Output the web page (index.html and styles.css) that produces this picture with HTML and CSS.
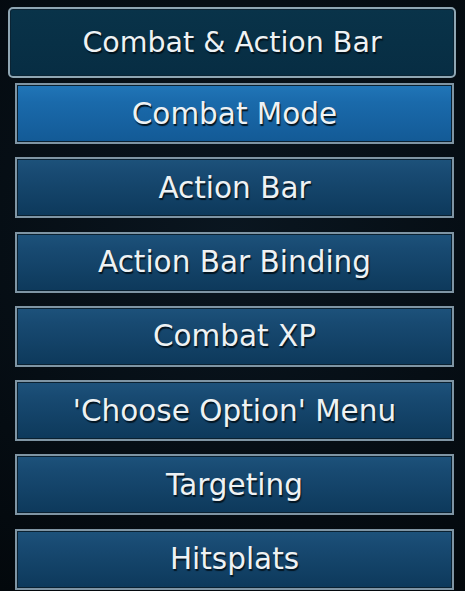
FILE: index.html
```html
<!DOCTYPE html>
<html lang="en">
<head>
    <meta charset="UTF-8">
    <meta name="viewport" content="width=device-width, initial-scale=1.0">
    <title>Combat &amp; Action Bar</title>
    <link rel="stylesheet" href="styles.css">
</head>
<body>
    <div class="panel">
        <div class="panel-title">Combat &amp; Action Bar</div>

        <ul class="menu">
            <li class="menu-item active">Combat Mode</li>
            <li class="menu-item">Action Bar</li>
            <li class="menu-item">Action Bar Binding</li>
            <li class="menu-item">Combat XP</li>
            <li class="menu-item">'Choose Option' Menu</li>
            <li class="menu-item">Targeting</li>
            <li class="menu-item">Hitsplats</li>
        </ul>
    </div>
</body>
</html>
```

FILE: styles.css
```css
* {
    margin: 0;
    padding: 0;
    box-sizing: border-box;
}

body {
    font-family: 'DejaVu Sans', Verdana, sans-serif;
    background: radial-gradient(circle at 50% 40%, #0a1620 0%, #050c12 70%, #03080c 100%);
    min-height: 100vh;
    color: #eef2f4;
}

.panel {
    padding: 7px 9px 0 8px;
}

.panel-title {
    height: 71px;
    display: flex;
    align-items: center;
    justify-content: center;
    background: linear-gradient(180deg, #093349 0%, #072d43 100%);
    border: 2px solid #8fa6b3;
    border-radius: 5px;
    box-shadow: inset 0 0 0 1px #0b2434;
    font-size: 28.5px;
    text-shadow: 1px 2px 1px #02121c;
    margin-bottom: 5px;
}

.menu {
    list-style: none;
    display: flex;
    flex-direction: column;
    gap: 13.3px;
    margin-left: 7px;
    margin-right: 2px;
}

.menu-item {
    height: 61px;
    display: flex;
    align-items: center;
    justify-content: center;
    background: linear-gradient(180deg, #1d527b 0%, #184a72 25%, #0d395b 100%);
    border: 2px solid #7f95a4;
    box-shadow: inset 0 0 0 1px #0a2131;
    font-size: 29.5px;
    text-shadow: 1px 2px 1px #031522;
    cursor: pointer;
}

.menu-item.active {
    background: linear-gradient(180deg, #2176b8 0%, #1a6aab 30%, #135a96 100%);
}
```
